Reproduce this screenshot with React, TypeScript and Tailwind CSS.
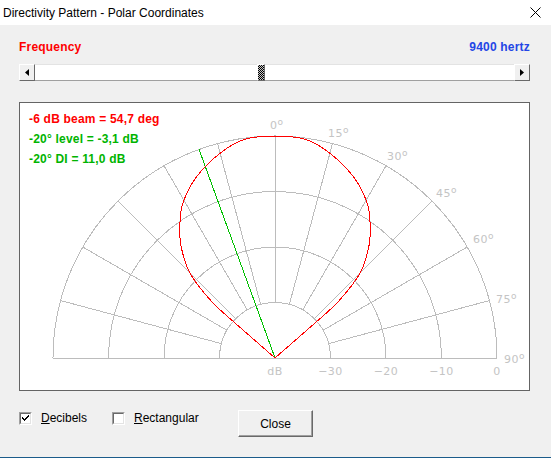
import React from 'react';

const CX = 275;
const CY = 358;
const STEP = 55.5; // px per 10 dB

// measured pattern: [angle deg, radius px]
const pattern: [number, number][] = [
  [0, 222],
  [8, 220.6],
  [15, 212],
  [23.4, 197.5],
  [30.4, 181.2],
  [34.9, 166.1],
  [39.8, 147],
  [45, 120.5],
  [48.2, 86],
  [48.9, 55],
];

const pt = (deg: number, r: number) => {
  const a = (deg * Math.PI) / 180;
  return [CX + r * Math.sin(a), CY - r * Math.cos(a)];
};

// smooth curve through the measured points (catmull-rom -> bezier)
const buildCurve = () => {
  const full: [number, number][] = [
    ...pattern
      .slice(1)
      .reverse()
      .map(([a, r]) => [-a, r] as [number, number]),
    ...pattern,
  ];
  const p = full.map(([a, r]) => pt(a, r));
  let d = `M${CX},${CY} L${p[0][0].toFixed(1)},${p[0][1].toFixed(1)}`;
  for (let i = 0; i < p.length - 1; i++) {
    const p0 = p[i - 1] ?? p[i];
    const p1 = p[i];
    const p2 = p[i + 1];
    const p3 = p[i + 2] ?? p[i + 1];
    const c1x = p1[0] + (p2[0] - p0[0]) / 6;
    const c1y = p1[1] + (p2[1] - p0[1]) / 6;
    const c2x = p2[0] - (p3[0] - p1[0]) / 6;
    const c2y = p2[1] - (p3[1] - p1[1]) / 6;
    d += ` C${c1x.toFixed(1)},${c1y.toFixed(1)} ${c2x.toFixed(1)},${c2y.toFixed(1)} ${p2[0].toFixed(1)},${p2[1].toFixed(1)}`;
  }
  return `${d} L${CX},${CY}`;
};

const arc = (r: number) => `M${CX - r},${CY} A${r},${r} 0 0 1 ${CX + r},${CY}`;

const angleLabels = [
  { t: '0', x: 270, y: 129 },
  { t: '15', x: 328, y: 137 },
  { t: '30', x: 387, y: 160 },
  { t: '45', x: 436, y: 197 },
  { t: '60', x: 473, y: 243 },
  { t: '75', x: 496, y: 303 },
  { t: '90', x: 504, y: 363 },
];

const dbLabels = [
  { t: 'dB', x: 275 },
  { t: '−30', x: 330.5 },
  { t: '−20', x: 386 },
  { t: '−10', x: 441.5 },
  { t: '0', x: 497 },
];

function PolarChart() {
  const grid = '#bcbcbc';
  const radials = [];
  for (let d = -75; d <= 75; d += 15) {
    const [x1, y1] = pt(d, STEP);
    const [x2, y2] = pt(d, STEP * 4);
    radials.push(<line key={d} x1={x1} y1={y1} x2={x2} y2={y2} stroke={grid} />);
  }
  const [gx, gy] = pt(-20, 222);

  return (
    <svg width={509} height={287} viewBox="20 103 509 287" shapeRendering="crispEdges">
      {[1, 2, 3, 4].map((k) => (
        <path key={k} d={arc(STEP * k)} fill="none" stroke={grid} />
      ))}
      {radials}
      <line x1={CX - 222} y1={CY} x2={CX + 222} y2={CY} stroke={grid} />
      <line x1={CX} y1={CY} x2={gx} y2={gy} stroke="#00c000" />
      <path d={buildCurve()} fill="none" stroke="#ff0000" />
      <g fill="#c4c4c4" fontFamily="'DejaVu Sans', sans-serif" fontSize={11} shapeRendering="auto">
        {angleLabels.map((l) => (
          <text key={l.t} x={l.x} y={l.y} letterSpacing={0.5}>
            {l.t}
            <tspan fontSize={9} dy={-4}>
              o
            </tspan>
          </text>
        ))}
        {dbLabels.map((l) => (
          <text key={l.t} x={l.x} y={375} textAnchor="middle" letterSpacing={0.5}>
            {l.t}
          </text>
        ))}
      </g>
    </svg>
  );
}

function ArrowButton({ dir }: { dir: 'left' | 'right' }) {
  return (
    <div className="w-[16px] h-full flex items-center justify-center bg-[#f0f0f0] border-t border-l border-t-white border-l-white border-b border-r border-b-[#696969] border-r-[#696969]">
      <svg width="4" height="7" viewBox="0 0 4 7">
        {dir === 'left' ? <path d="M4 0 L0 3.5 L4 7 Z" fill="#000" /> : <path d="M0 0 L4 3.5 L0 7 Z" fill="#000" />}
      </svg>
    </div>
  );
}

function Checkbox({ checked, label }: { checked: boolean; label: string }) {
  return (
    <div className="flex items-center gap-[9px]">
      <div className="w-[13px] h-[13px] bg-white border border-t-[#a0a0a0] border-l-[#a0a0a0] border-b-white border-r-white flex items-center justify-center">
        <div className="w-[11px] h-[11px] border border-t-[#696969] border-l-[#696969] border-b-[#e3e3e3] border-r-[#e3e3e3] flex items-center justify-center">
          {checked && (
            <svg width="7" height="7" viewBox="0 0 7 7" shapeRendering="crispEdges">
              <path d="M0 2 L0 4 L2 6 L7 1 L7 -1 L2 4 Z" fill="#000" />
            </svg>
          )}
        </div>
      </div>
      <span className="text-[12px] text-black">
        <span className="underline">{label[0]}</span>
        {label.slice(1)}
      </span>
    </div>
  );
}

export default function App() {
  return (
    <div className="w-[551px] h-[458px] flex flex-col bg-[#f0f0f0] font-['Liberation_Sans',Arial,sans-serif] border-b border-[#1b5b8a]">
      {/* Title bar */}
      <div className="h-[25px] bg-white flex items-center justify-between pl-[3px] pr-[10px] shrink-0">
        <span className="text-[12px] text-black">Directivity Pattern - Polar Coordinates</span>
        <svg width="11" height="11" viewBox="0 0 11 11">
          <path d="M0.5 0.5 L10.5 10.5 M10.5 0.5 L0.5 10.5" stroke="#000" strokeWidth="1" />
        </svg>
      </div>

      <div className="pl-[19px] pr-[21px] flex flex-col">
        {/* Frequency row */}
        <div className="mt-[15px] h-[14px] flex items-center justify-between text-[12px] font-bold tracking-[0.2px]">
          <span className="text-[#ff0000]">Frequency</span>
          <span className="text-[#2346e6]">9400 hertz</span>
        </div>

        {/* Scrollbar */}
        <div className="mt-[10px] h-[17px] flex bg-white">
          <ArrowButton dir="left" />
          <div className="w-[222px] h-full border-t border-[#e3e3e3] border-b-[#a0a0a0] border-b" />
          <div className="w-[8px] h-full border border-t-white border-l-white border-b-[#696969] border-r-[#696969] bg-[repeating-conic-gradient(#000_0_25%,#c8c8c8_0_50%)] bg-[length:2px_2px]" />
          <div className="flex-1 h-full border-t border-[#e3e3e3] border-b-[#a0a0a0] border-b" />
          <ArrowButton dir="right" />
        </div>

        {/* Chart */}
        <div className="relative mt-[21px] h-[289px] border border-[#646464] bg-white overflow-hidden">
          <PolarChart />
          <div className="absolute left-[9px] top-[6px] text-[12px] font-bold leading-[20px] tracking-[0.2px]">
            <div className="text-[#ff0000]">-6 dB beam = 54,7 deg</div>
            <div className="text-[#00b400]">-20° level = -3,1 dB</div>
            <div className="text-[#00b400]">-20° DI = 11,0 dB</div>
          </div>
        </div>

        {/* Bottom controls */}
        <div className="mt-[18px] flex items-start">
          <div className="w-[93px]">
            <Checkbox checked label="Decibels" />
          </div>
          <div className="w-[126px]">
            <Checkbox checked={false} label="Rectangular" />
          </div>
          <button
            type="button"
            className="mt-[1px] w-[75px] h-[27px] bg-[#f0f0f0] text-[12px] text-black border border-t-white border-l-white border-b-[#696969] border-r-[#696969] shadow-[inset_-1px_-1px_0_#a0a0a0]"
          >
            Close
          </button>
        </div>
      </div>
    </div>
  );
}
